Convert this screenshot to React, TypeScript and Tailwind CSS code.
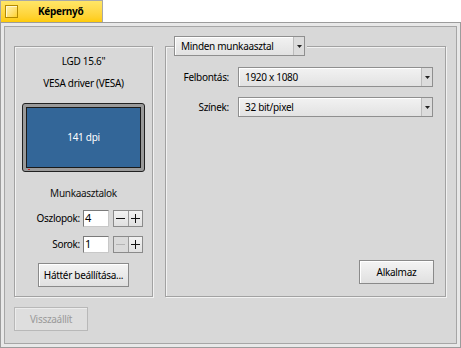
import React from 'react';

const font = { fontFamily: '"Noto Sans", "DejaVu Sans", sans-serif' };

const Arrow: React.FC = () => (
  <svg width="5" height="3" viewBox="0 0 5 3">
    <path d="M0 0h5L2.5 3z" fill="#222" />
  </svg>
);

const MenuField: React.FC<{ value: string; className?: string }> = ({ value, className }) => (
  <div
    className={`flex h-[20px] items-stretch border border-[#8f8f8f] bg-gradient-to-b from-[#f2f2f2] to-[#e2e2e2] shadow-[inset_1px_1px_0_#ffffff] ${className ?? ''}`}
  >
    <div className="flex flex-1 items-center whitespace-nowrap pl-[6px] text-black">{value}</div>
    <div className="flex w-[11px] items-center justify-center border-l border-[#bcbcbc] bg-[#dcdcdc]">
      <Arrow />
    </div>
  </div>
);

const Button: React.FC<{ label: string; disabled?: boolean; className?: string }> = ({ label, disabled, className }) => (
  <div
    className={`flex items-center justify-center whitespace-nowrap border ${
      disabled
        ? 'border-[#b8b8b8] bg-[#dedede] text-[#9a9a9a] shadow-[inset_1px_1px_0_#ececec]'
        : 'border-[#8a8a8a] bg-gradient-to-b from-[#f4f4f4] to-[#e0e0e0] text-black shadow-[inset_1px_1px_0_#ffffff]'
    } ${className ?? ''}`}
  >
    {label}
  </div>
);

const Stepper: React.FC<{ minusDisabled?: boolean }> = ({ minusDisabled }) => (
  <div className="flex h-[17px] w-[30px] border border-[#8a8a8a] bg-gradient-to-b from-[#f2f2f2] to-[#e0e0e0]">
    <div
      className={`flex flex-1 items-center justify-center border-r border-[#9a9a9a] ${
        minusDisabled ? 'bg-[#dadada]' : ''
      }`}
    >
      <div className={`h-px w-[9px] ${minusDisabled ? 'bg-[#b4b4b4]' : 'bg-[#111]'}`} />
    </div>
    <div className="relative flex flex-1 items-center justify-center">
      <div className="h-px w-[9px] bg-[#111]" />
      <div className="absolute h-[9px] w-px bg-[#111]" />
    </div>
  </div>
);

const CountRow: React.FC<{ label: string; value: string; minusDisabled?: boolean; className?: string }> = ({
  label,
  value,
  minusDisabled,
  className,
}) => (
  <div className={`flex h-[17px] items-center ${className ?? ''}`}>
    <div className="w-[68px] pr-[3px] text-right text-black">{label}</div>
    <div className="flex h-[17px] w-[26px] items-center border border-t-[#7a7a7a] border-l-[#7a7a7a] border-r-[#c8c8c8] border-b-[#c8c8c8] bg-white pl-[1px] text-[11px] text-black">
      {value}
    </div>
    <div className="ml-[4px]">
      <Stepper minusDisabled={minusDisabled} />
    </div>
  </div>
);

export default function App() {
  return (
    <div className="h-[348px] w-[461px] overflow-hidden bg-white text-[10px] tracking-[-0.3px]" style={font}>
      {/* tab */}
      <div className="flex h-[22px] w-[103px] items-center border-r border-t border-l border-[#a8a8a8] bg-gradient-to-b from-[#ffe666] to-[#ffcb00]">
        <div className="ml-[4px] h-[13px] w-[13px] border border-[#b48a00] bg-gradient-to-br from-[#fff3b0] to-[#ffd21a] shadow-[inset_1px_1px_0_#fff8d0]" />
        <div className="ml-[20px] font-bold text-black">Képernyő</div>
      </div>

      {/* window frame */}
      <div className="h-[326px] border border-[#9c9c9c] bg-[#e8e8e8] p-[3px]">
        <div className="flex h-full flex-col border border-[#a6a6a6] bg-[#d8d8d8] px-[9px] pt-[19px]">
          <div className="flex gap-[12px]">
            {/* left box */}
            <div className="flex h-[251px] w-[139px] flex-col items-center border border-[#a2a2a2] shadow-[inset_1px_1px_0_#f2f2f2,1px_1px_0_#f2f2f2]">
              <div className="mt-[7px] h-[14px] leading-[14px] text-black">LGD 15.6"</div>
              <div className="mt-[8px] h-[14px] leading-[14px] text-black">VESA driver (VESA)</div>
              <div className="relative mt-[13px] h-[69px] w-[123px] rounded-[3px] border border-[#222] bg-[#9a9a9a] p-[3px]">
                <div className="flex h-full w-full items-center justify-center border border-[#1a1a1a] bg-[#336698] text-white">
                  141 dpi
                </div>
                <div className="absolute bottom-[1px] left-[5px] h-px w-[2px] bg-[#e02020]" />
              </div>
              <div className="mt-[14px] h-[14px] leading-[14px] text-[#111]">Munkaasztalok</div>
              <div className="w-full">
                <CountRow label="Oszlopok:" value="4" className="mt-[10px]" />
                <CountRow label="Sorok:" value="1" minusDisabled className="mt-[9px]" />
              </div>
              <Button label="Háttér beállítása..." className="mt-[10px] h-[24px] w-[91px]" />
            </div>

            {/* right box */}
            <div className="relative h-[251px] w-[281px] border border-[#a2a2a2] shadow-[inset_1px_1px_0_#f2f2f2,1px_1px_0_#f2f2f2]">
              <div className="absolute left-[8px] top-[-11px] bg-[#d8d8d8] pr-[2px]">
                <MenuField value="Minden munkaasztal" className="w-[131px]" />
              </div>
              <div className="flex flex-col gap-[10px] pl-[1px] pr-[12px] pt-[20px]">
                <div className="flex items-center">
                  <div className="w-[62px] text-right text-black">Felbontás:</div>
                  <MenuField value="1920 x 1080" className="ml-[9px] flex-1" />
                </div>
                <div className="flex items-center">
                  <div className="w-[62px] text-right text-black">Színek:</div>
                  <MenuField value="32 bit/pixel" className="ml-[9px] flex-1" />
                </div>
              </div>
              <div className="absolute bottom-[12px] right-[11px]">
                <Button label="Alkalmaz" className="h-[24px] w-[75px]" />
              </div>
            </div>
          </div>
          <Button label="Visszaállít" disabled className="mt-[10px] h-[24px] w-[74px]" />
        </div>
      </div>
    </div>
  );
}
